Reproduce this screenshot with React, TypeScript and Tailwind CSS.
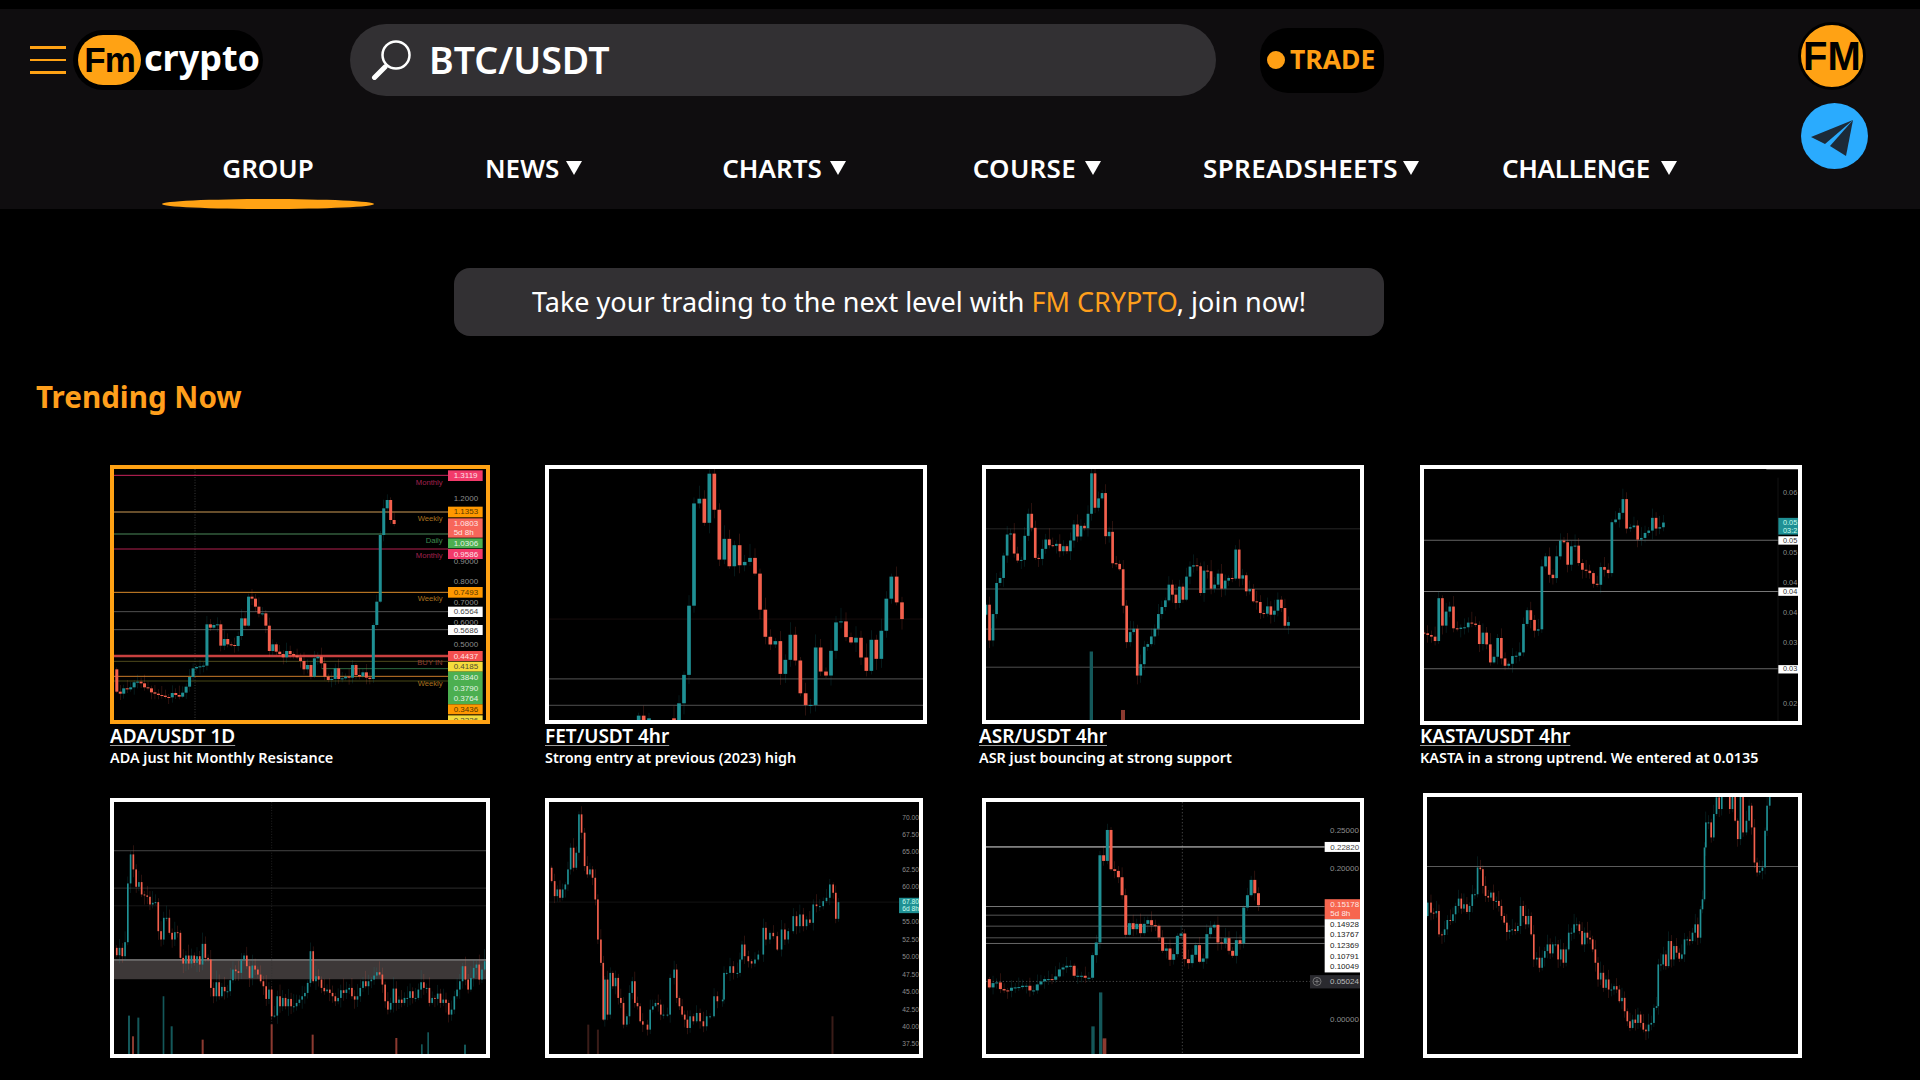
import React from 'react';

type Pt = number[];

const TEAL = '#1f9094';
const RED = '#f4604d';

const even = (x0: number, step: number, ys: number[]): Pt[] => ys.map((y, i) => [x0 + i * step, y]);

// candles run from the previous close to this one
const Candles = ({ pts, bw, wick = 1 }: { pts: Pt[]; bw: number; wick?: number }) => (
  <g>
    {pts.slice(1).map((p, i) => {
      const prev = pts[i][1];
      const top = Math.min(prev, p[1]);
      const bottom = Math.max(prev, p[1]);
      const color = p[1] > prev ? RED : TEAL;
      const up = (6 + ((i * 37) % 23)) * wick;
      const down = (4 + ((i * 53) % 19)) * wick;
      return (
        <g key={i}>
          <rect x={p[0] - 0.75} y={top - up} width={1.5} height={bottom - top + up + down} fill={color} opacity={0.35} />
          <rect x={p[0] - bw / 2} y={top} width={bw} height={Math.max(bottom - top, 3)} fill={color} />
        </g>
      );
    })}
  </g>
);

const HL = ({ y, x1 = 0, x2 = 1300, color = '#7a7a7a', w = 2 }: { y: number; x1?: number; x2?: number; color?: string; w?: number }) => (
  <line x1={x1} x2={x2} y1={y} y2={y} stroke={color} strokeWidth={w} />
);

const Tag = ({ x, w, y, h, bg, fg = '#ffffff', text }: { x: number; w: number; y: number; h: number; bg: string; fg?: string; text?: string[] }) => (
  <g>
    <rect x={x} y={y} width={w} height={h} fill={bg} />
    {(text || []).map((t, i) => (
      <text key={i} x={x + 17} y={y + 23 + i * 27} fontSize={24} fill={fg} opacity={0.85}>
        {t}
      </text>
    ))}
  </g>
);

const Axis = ({ x, size = 24, items }: { x: number; size?: number; items: [number, string][] }) => (
  <g>
    {items.map(([y, t]) => (
      <text key={y} x={x} y={y + 8} fontSize={size} fill="#8d8d8d">
        {t}
      </text>
    ))}
  </g>
);

const Note = ({ y, color, text }: { y: number; color: string; text: string }) => (
  <text x={1028} y={y + 8} fontSize={23} fill={color} textAnchor="end">
    {text}
  </text>
);

const Chart = ({ vb, children }: { vb: string; children: React.ReactNode }) => (
  <svg viewBox={vb} preserveAspectRatio="none" className="block w-full h-full bg-black font-['Liberation_Sans',sans-serif]">
    {children}
  </svg>
);

const ada = even(40, 10.4, [643, 710, 716, 700, 703, 697, 682, 680, 685, 697, 700, 712, 716, 720, 722, 726, 727, 714, 720, 725, 713, 695, 666, 640, 636, 634, 632, 508, 518, 510, 508, 572, 552, 568, 570, 573, 543, 490, 512, 425, 431, 455, 476, 475, 512, 588, 568, 590, 597, 607, 588, 597, 602, 607, 618, 643, 630, 665, 610, 605, 625, 665, 675, 672, 640, 672, 670, 665, 668, 630, 660, 664, 652, 668, 672, 510, 440, 240, 160, 135, 195, 207]);

const fet: Pt[] = [[310, 795], [325, 782], [340, 795], [356, 790], [431, 795], [446, 745], [461, 660], [476, 453], [491, 147], [507, 133], [522, 205], [537, 58], [552, 166], [567, 315], [582, 253], [597, 335], [612, 272], [628, 332], [643, 322], [659, 310], [674, 357], [689, 465], [705, 546], [720, 569], [735, 559], [750, 657], [765, 615], [780, 540], [795, 617], [810, 715], [826, 750], [841, 750], [856, 578], [871, 650], [887, 662], [902, 588], [917, 503], [932, 500], [947, 547], [962, 563], [977, 549], [992, 608], [1008, 648], [1023, 555], [1038, 612], [1053, 528], [1068, 432], [1083, 366], [1099, 443], [1115, 493]];

const asr = even(67.5, 10.55, [480, 450, 557, 478, 385, 370, 303, 240, 237, 297, 318, 316, 244, 178, 220, 310, 313, 283, 255, 272, 274, 268, 290, 275, 290, 258, 210, 246, 214, 221, 178, 57, 160, 132, 116, 245, 232, 326, 328, 344, 453, 562, 532, 522, 662, 628, 576, 568, 545, 522, 478, 457, 437, 390, 420, 445, 396, 435, 366, 336, 332, 335, 415, 348, 350, 402, 390, 357, 402, 378, 370, 372, 285, 372, 362, 410, 403, 440, 442, 475, 477, 455, 480, 468, 435, 460, 513, 502]);

const kasta = even(62, 11.05, [533, 535, 540, 545, 558, 430, 512, 470, 455, 520, 522, 518, 517, 503, 506, 510, 567, 533, 568, 622, 605, 549, 610, 632, 626, 603, 602, 592, 507, 466, 495, 527, 523, 335, 305, 360, 370, 305, 258, 263, 330, 275, 273, 325, 345, 348, 355, 387, 390, 337, 345, 355, 203, 195, 175, 134, 222, 218, 213, 255, 250, 235, 228, 190, 222, 218, 204]);

const wide = even(42, 8.3, [475, 497, 475, 500, 458, 282, 195, 240, 292, 278, 315, 318, 322, 345, 340, 338, 425, 450, 385, 385, 430, 450, 428, 430, 505, 522, 498, 522, 498, 520, 500, 525, 463, 505, 510, 595, 620, 578, 620, 592, 605, 605, 572, 540, 545, 550, 510, 498, 530, 565, 528, 540, 555, 575, 590, 628, 600, 680, 678, 620, 650, 625, 650, 628, 650, 650, 640, 630, 620, 610, 580, 485, 575, 560, 570, 595, 605, 600, 610, 620, 635, 625, 602, 610, 600, 595, 620, 630, 620, 595, 575, 590, 575, 570, 558, 548, 555, 585, 635, 660, 640, 597, 640, 630, 640, 625, 625, 605, 625, 625, 600, 578, 595, 595, 640, 625, 628, 612, 640, 630, 640, 675, 660, 620, 600, 575, 530, 570, 600, 565, 535, 525, 570, 540, 515]);

const sixth: Pt[] = [[56, 235], [64, 275], [73, 320], [81, 300], [89, 325], [97, 300], [105, 285], [113, 240], [121, 175], [130, 235], [138, 190], [146, 75], [154, 130], [163, 230], [171, 255], [179, 240], [187, 265], [195, 330], [203, 450], [212, 520], [219, 690], [224, 570], [232, 675], [240, 550], [248, 590], [256, 565], [264, 625], [272, 640], [280, 705], [290, 680], [298, 610], [306, 575], [314, 640], [322, 650], [330, 695], [338, 705], [352, 720], [360, 660], [368, 650], [376, 640], [384, 645], [392, 675], [400, 675], [412, 675], [420, 565], [432, 540], [440, 625], [448, 650], [456, 675], [464, 690], [472, 715], [480, 680], [490, 695], [500, 670], [510, 695], [520, 710], [530, 680], [540, 680], [552, 620], [562, 635], [578, 630], [582, 550], [590, 550], [600, 530], [610, 550], [622, 550], [630, 510], [636, 465], [644, 500], [655, 515], [665, 522], [675, 510], [685, 495], [700, 415], [708, 450], [720, 430], [730, 440], [742, 480], [755, 420], [765, 450], [775, 425], [790, 380], [800, 410], [810, 375], [820, 410], [830, 390], [840, 400], [850, 345], [860, 350], [870, 350], [880, 335], [890, 325], [900, 285], [910, 310], [918, 388], [926, 338]];

const seventh = even(77, 11.06, [570, 595, 582, 580, 600, 604, 605, 596, 595, 594, 590, 590, 604, 604, 586, 577, 570, 570, 572, 562, 541, 535, 530, 530, 560, 560, 560, 566, 566, 498, 460, 198, 215, 122, 240, 245, 264, 318, 437, 402, 420, 404, 432, 404, 393, 408, 410, 445, 485, 478, 512, 495, 440, 433, 510, 522, 497, 468, 518, 508, 435, 415, 407, 460, 462, 447, 485, 500, 453, 463, 355, 318, 272, 312, 348]);

const eighth: Pt[] = [[74, 380], [82, 340], [92, 370], [100, 372], [108, 365], [116, 435], [125, 437], [133, 420], [141, 392], [150, 395], [158, 375], [166, 350], [175, 328], [183, 358], [191, 345], [200, 368], [208, 350], [216, 315], [224, 315], [232, 235], [240, 240], [248, 290], [256, 320], [264, 325], [272, 310], [280, 335], [288, 335], [296, 350], [304, 380], [312, 400], [320, 428], [328, 422], [336, 420], [345, 425], [353, 410], [361, 350], [369, 380], [377, 405], [385, 380], [393, 435], [401, 510], [410, 505], [418, 535], [426, 505], [434, 485], [442, 465], [450, 492], [458, 465], [466, 465], [474, 510], [482, 480], [490, 520], [498, 480], [506, 430], [514, 430], [522, 405], [530, 405], [538, 425], [546, 465], [554, 430], [562, 445], [570, 450], [578, 480], [586, 520], [594, 570], [602, 550], [610, 595], [618, 570], [626, 600], [634, 600], [642, 590], [650, 600], [658, 635], [666, 625], [674, 665], [682, 695], [690, 715], [698, 690], [706, 700], [714, 675], [722, 700], [730, 720], [738, 725], [746, 705], [754, 700], [762, 655], [770, 650], [775, 525], [783, 525], [790, 495], [798, 530], [806, 455], [814, 510], [822, 470], [830, 490], [838, 508], [846, 495], [854, 450], [862, 450], [870, 455], [878, 430], [886, 405], [894, 445], [902, 360], [908, 330], [914, 175], [918, 100], [926, 100], [934, 145], [942, 75], [950, 25], [958, 60], [966, 24], [990, 60], [998, 24], [1006, 95], [1014, 150], [1022, 24], [1030, 130], [1040, 95], [1048, 50], [1056, 115], [1064, 220], [1072, 250], [1080, 245], [1088, 235], [1096, 125], [1102, 50], [1110, 24]];

const Caption = ({ title, text, className = '' }: { title: string; text: string; className?: string }) => (
  <div className={`text-white ${className}`}>
    <div className="text-[19px] leading-[24px] font-semibold underline decoration-[#9a9a9a] underline-offset-2">{title}</div>
    <div className="text-[14.4px] leading-[19px] font-semibold">{text}</div>
  </div>
);

const Arrow = ({ className = 'ml-[7px]' }: { className?: string }) => (
  <span className={`w-0 h-0 border-l-[8px] border-r-[8px] border-t-[14px] border-l-transparent border-r-transparent border-t-white ${className}`} />
);

const App = () => {
  return (
    <div className="h-screen w-full overflow-hidden bg-black pt-[9px] font-['Noto_Sans',sans-serif]">
      {/* Header */}
      <header className="flex h-[200px] bg-[#0f0d0f]">
        <div className="w-[1801px]">
          <div className="flex items-center h-[72px] mt-[15px]">
            <div className="ml-[30px] w-[36px] flex flex-col gap-[10px]">
              <span className="block h-[2.5px] bg-[#ffa214]" />
              <span className="block h-[2.5px] bg-[#ffa214]" />
              <span className="block h-[2.5px] bg-[#ffa214]" />
            </div>
            <div className="ml-[7px] flex items-center w-[190px] h-[60px] rounded-full bg-black pl-[5px]">
              <span className="flex items-center justify-center w-[63px] h-[50px] rounded-full bg-[#ffa214] text-black text-[35px] font-bold font-['Liberation_Sans',sans-serif] tracking-tight">Fm</span>
              <span className="ml-[3px] text-white text-[36px] leading-none font-bold mb-[4px]">crypto</span>
            </div>
            <div className="ml-[87px] flex items-center w-[866px] h-[72px] rounded-full bg-[#323033] pl-[21px]">
              <svg viewBox="0 0 41 40" className="w-[41px] h-[40px]" fill="none" stroke="#ffffff">
                <ellipse cx="25" cy="15" rx="13.5" ry="13.5" strokeWidth="2.5" />
                <path d="M14 27 L3.5 37.5" strokeWidth="5" strokeLinecap="round" />
              </svg>
              <span className="ml-[17px] text-white text-[37.5px] font-semibold">BTC/USDT</span>
            </div>
            <div className="ml-[44px] flex items-center w-[124px] h-[65px] rounded-[28px] bg-black pl-[7px]">
              <span className="w-[18px] h-[18px] rounded-full bg-[#ff9f14]" />
              <span className="ml-[5px] text-[#ff9f14] text-[26.5px] font-bold">TRADE</span>
            </div>
          </div>
          <nav className="flex items-start mt-[56px] text-white text-[26px] leading-[32px] font-semibold">
            <div className="ml-[162px] w-[212px] flex flex-col items-center">
              <span>GROUP</span>
              <span className="mt-[15px] w-[212px] h-[10px] rounded-[50%] bg-[#ffa214]" />
            </div>
            <div className="ml-[111px] flex items-center">NEWS<Arrow /></div>
            <div className="ml-[140px] flex items-center">CHARTS<Arrow className="ml-[8px]" /></div>
            <div className="ml-[127px] flex items-center tracking-[0.3px]">COURSE<Arrow className="ml-[9px]" /></div>
            <div className="ml-[102px] flex items-center tracking-[0.4px]">SPREADSHEETS<Arrow className="ml-[5px]" /></div>
            <div className="ml-[83px] flex items-center tracking-[-0.3px]">CHALLENGE<Arrow className="ml-[11px]" /></div>
          </nav>
        </div>
        <div className="pt-[13px] -ml-[3px]">
          <div className="flex items-center justify-center w-[68px] h-[68px] rounded-full bg-[#ffa214] border-[3px] border-black text-black text-[40px] font-bold font-['Liberation_Sans',sans-serif]">FM</div>
          <svg viewBox="0 0 67 66" className="mt-[13px] ml-[3px] w-[67px] h-[66px]">
            <ellipse cx="33.5" cy="33" rx="33.5" ry="33" fill="#2aabfe" />
            <path d="M52 17 L10 34 L24 41 Z" fill="#1c2a38" />
            <path d="M52 17 L29 43 L45 53 Z" fill="#1c2a38" />
          </svg>
        </div>
      </header>

      {/* Banner */}
      <div className="mt-[59px] ml-[454px] flex items-center justify-center w-[930px] h-[68px] rounded-2xl bg-[#323033] text-[27px] text-white">
        <span>Take your trading to the next level with <span className="text-[#ff9f1c]">FM CRYPTO</span>, join now!</span>
      </div>

      <h2 className="mt-[41px] ml-[36px] text-[29.6px] leading-[40px] font-bold text-[#ff9f1c]">Trending Now</h2>

      {/* Charts */}
      <div className="mt-[48px] ml-[110px]">
        <div className="flex h-[333px]">
          <div className="w-[435px]">
            <div className="w-[380px] h-[259px] border-4 border-[#ffa214]">
              <Chart vb="42 42 1116 753">
                <line x1="285" x2="285" y1="42" y2="795" stroke="#555" strokeWidth="2" strokeDasharray="3 5" />
                <HL y={61} x2={1044} color="#c9245c" w={3} />
                <HL y={171} x2={1044} color="#8a683a" w={4} />
                <HL y={237} x2={1044} color="#4d8a5a" w={3} />
                <HL y={282} x2={1044} color="#b3204e" w={3} />
                <HL y={412} x2={1044} color="#d98a2a" w={3} />
                <HL y={470} x2={1044} />
                <HL y={524} x2={1044} />
                <HL y={603} x2={1044} color="#c8403f" w={7} />
                <HL y={619} x2={1044} color="#77702a" />
                <HL y={641} x1={665} x2={1044} color="#2d6b42" w={3} />
                <HL y={664} x2={1044} color="#c87a2a" w={3} />
                <HL y={678} x2={1044} color="#6a6a20" />
                <Candles pts={ada} bw={9} wick={1} />
                <Note y={81} color="#a3224f" text="Monthly" />
                <Note y={190} color="#a8701f" text="Weekly" />
                <Note y={255} color="#3f8a50" text="Daily" />
                <Note y={301} color="#a3224f" text="Monthly" />
                <Note y={431} color="#a8701f" text="Weekly" />
                <Note y={622} color="#8a3a30" text="BUY IN" />
                <Note y={684} color="#a8701f" text="Weekly" />
                <Axis x={1061} items={[[131, '1.2000'], [318, '0.9000'], [380, '0.8000'], [443, '0.7000'], [503, '0.6000'], [567, '0.5000']]} />
                <Tag x={1044} w={104} y={46} h={32} bg="#f23a6a" text={['1.3119']} />
                <Tag x={1044} w={104} y={155} h={32} bg="#ff9800" fg="#3a2a00" text={['1.1353']} />
                <Tag x={1044} w={104} y={190} h={58} bg="#f7665a" text={['1.0803', '5d 8h']} />
                <Tag x={1044} w={104} y={250} h={30} bg="#4caf50" text={['1.0306']} />
                <Tag x={1044} w={104} y={282} h={30} bg="#f23a6a" text={['0.9586']} />
                <Tag x={1044} w={104} y={396} h={32} bg="#ff9800" fg="#3a2a00" text={['0.7493']} />
                <Tag x={1044} w={104} y={455} h={31} bg="#ffffff" fg="#222" text={['0.6564']} />
                <Tag x={1044} w={104} y={510} h={30} bg="#ffffff" fg="#222" text={['0.5686']} />
                <Tag x={1044} w={104} y={588} h={30} bg="#f44f4f" text={['0.4437']} />
                <Tag x={1044} w={104} y={620} h={30} bg="#f5dc3c" fg="#333" text={['0.4185']} />
                <Tag x={1044} w={104} y={650} h={98} bg="#4caf50" text={[]} />
                <text x={1061} y={675} fontSize={24} fill="#fff" opacity={0.85}>0.3840</text>
                <text x={1061} y={707} fontSize={24} fill="#fff" opacity={0.85}>0.3790</text>
                <text x={1061} y={739} fontSize={24} fill="#fff" opacity={0.85}>0.3764</text>
                <Tag x={1044} w={104} y={748} h={30} bg="#ff9800" fg="#3a2a00" text={['0.3436']} />
                <Tag x={1044} w={104} y={781} h={20} bg="#f5dc3c" fg="#333" text={['0.3336']} />
              </Chart>
            </div>
            <Caption title="ADA/USDT 1D" text="ADA just hit Monthly Resistance" />
          </div>
          <div className="w-[437px]">
            <div className="w-[382px] h-[259px] border-4 border-white">
              <Chart vb="56 44 1122 751">
                <HL y={493} color="#241414" />
                <HL y={672} color="#444" w={4} />
                <HL y={751} color="#777" />
                <Candles pts={fet} bw={11} wick={1.5} />
              </Chart>
            </div>
            <Caption title="FET/USDT 4hr" text="Strong entry at previous (2023) high" />
          </div>
          <div className="w-[438px]">
            <div className="w-[382px] h-[259px] border-4 border-white">
              <Chart vb="78 44 1122 751">
                <HL y={223} color="#3a3a3a" />
                <HL y={403} color="#666" />
                <HL y={523} color="#888" />
                <HL y={637} color="#777" />
                <rect x="389" y="590" width="10" height="205" fill="#14585a" />
                <rect x="483" y="765" width="12" height="30" fill="#8c3a30" />
                <Candles pts={asr} bw={8} wick={1.2} />
              </Chart>
            </div>
            <Caption className="-ml-[3px]" title="ASR/USDT 4hr" text="ASR just bouncing at strong support" />
          </div>
          <div>
            <div className="w-[382px] h-[260px] border-4 border-white">
              <Chart vb="73 44 1122 753">
                <HL y={257} color="#666" x2={1137} w={3} />
                <HL y={410} color="#777" x2={1137} w={3} />
                <HL y={641} color="#666" x2={1137} w={3} />
                <line x1="1135" x2="1135" y1="70" y2="797" stroke="#1d1d1d" strokeWidth="2" />
                <rect x="1100" y="44" width="95" height="3" fill="#444" />
                <Candles pts={kasta} bw={8} wick={1.2} />
                <Axis x={1150} size={22} items={[[115, '0.06'], [293, '0.05'], [384, '0.04'], [473, '0.04'], [563, '0.03'], [743, '0.02']]} />
                <Tag x={1136} w={60} y={190} h={50} bg="#1f9094" />
                <text x={1150} y={210} fontSize={22} fill="#cfe">0.05</text>
                <text x={1150} y={234} fontSize={22} fill="#cfe">03:2</text>
                <rect x="1136" y="245" width="60" height="25" fill="#fff" />
                <text x={1150} y={265} fontSize={22} fill="#333">0.05</text>
                <rect x="1136" y="398" width="60" height="25" fill="#fff" />
                <text x={1150} y={418} fontSize={22} fill="#333">0.04</text>
                <rect x="1136" y="630" width="60" height="25" fill="#fff" />
                <text x={1150} y={649} fontSize={22} fill="#333">0.03</text>
              </Chart>
            </div>
            <Caption className="-mt-px" title="KASTA/USDT 4hr" text="KASTA in a strong uptrend. We entered at 0.0135" />
          </div>
        </div>

        <div className="flex">
          <div className="w-[435px]">
            <div className="w-[380px] h-[260px] border-4 border-white">
              <Chart vb="42 38 1116 755">
                <rect x="42" y="511" width="1116" height="58" fill="#3d3838" />
                <HL y={511} color="#8a8a8a" w={3} />
                <HL y={184} color="#666" />
                <HL y={296} color="#444" />
                <HL y={349} color="#222" />
                <line x1="515" x2="515" y1="38" y2="793" stroke="#333" strokeWidth="2" strokeDasharray="3 5" />
                <rect x="84" y="678" width="6" height="115" fill="#14585a" />
                <rect x="112" y="684" width="6" height="109" fill="#14585a" />
                <rect x="188" y="620" width="5" height="173" fill="#14585a" />
                <rect x="212" y="710" width="6" height="83" fill="#14585a" />
                <rect x="96" y="740" width="6" height="53" fill="#8c3a30" />
                <rect x="512" y="704" width="6" height="89" fill="#8c3a30" />
                <rect x="635" y="735" width="6" height="58" fill="#8c3a30" />
                <rect x="305" y="750" width="6" height="43" fill="#8c3a30" />
                <rect x="982" y="728" width="5" height="65" fill="#14585a" />
                <rect x="963" y="764" width="5" height="29" fill="#14585a" />
                <rect x="1092" y="765" width="6" height="28" fill="#14585a" />
                <rect x="886" y="745" width="6" height="48" fill="#8c3a30" />
                <Candles pts={wide} bw={5} wick={1.3} />
              </Chart>
            </div>
          </div>
          <div className="w-[437px]">
            <div className="w-[378px] h-[260px] border-4 border-white">
              <Chart vb="56 38 1112 755">
                <HL y={338} color="#1c1c1c" />
                <rect x="171" y="705" width="6" height="88" fill="#3a1c18" />
                <rect x="200" y="720" width="6" height="73" fill="#3a1c18" />
                <rect x="905" y="680" width="6" height="113" fill="#3a1c18" />
                <Candles pts={sixth} bw={5} wick={1.1} />
                <Axis x={1118} size={20} items={[[83, '70.00'], [135, '67.50'], [187, '65.00'], [240, '62.50'], [292, '60.00'], [397, '55.00'], [449, '52.50'], [501, '50.00'], [553, '47.50'], [605, '45.00'], [658, '42.50'], [710, '40.00'], [762, '37.50']]} />
                <rect x="1108" y="325" width="60" height="46" fill="#1f9094" />
                <text x={1118} y={345} fontSize={20} fill="#cfe">67.80</text>
                <text x={1118} y={366} fontSize={20} fill="#cfe">6d 8h</text>
              </Chart>
            </div>
          </div>
          <div className="w-[441px]">
            <div className="w-[382px] h-[260px] border-4 border-white">
              <Chart vb="78 38 1122 757">
                <line x1="667" x2="667" y1="38" y2="795" stroke="#666" strokeWidth="2" strokeDasharray="4 6" />
                <line x1="78" x2="1050" y1="577" y2="577" stroke="#666" strokeWidth="2" strokeDasharray="4 6" />
                <HL y={173} x2={1094} color="#e4e4e4" w={3} />
                <HL y={352} x2={1094} color="#777" w={3} />
                <HL y={378} x2={1094} color="#555" w={3} />
                <HL y={411} x2={1094} color="#555" w={3} />
                <HL y={446} x2={1094} color="#555" w={3} />
                <HL y={463} x2={1094} color="#666" w={3} />
                <rect x="394" y="712" width="10" height="83" fill="#14585a" />
                <rect x="417" y="610" width="10" height="185" fill="#14585a" />
                <rect x="428" y="748" width="11" height="47" fill="#8c3a30" />
                <Candles pts={seventh} bw={9} wick={1.1} />
                <Axis x={1110} items={[[122, '0.25000'], [236, '0.20000'], [691, '0.00000']]} />
                <Tag x={1094} w={106} y={158} h={30} bg="#ffffff" fg="#222" text={['0.22820']} />
                <Tag x={1094} w={106} y={330} h={60} bg="#f7664f" text={['0.15178', '5d 8h']} />
                <rect x="1094" y="390" width="106" height="160" fill="#fff" />
                <text x={1110} y={413} fontSize={24} fill="#222">0.14928</text>
                <text x={1110} y={445} fontSize={24} fill="#222">0.13767</text>
                <text x={1110} y={478} fontSize={24} fill="#222">0.12369</text>
                <text x={1110} y={509} fontSize={24} fill="#222">0.10791</text>
                <text x={1110} y={541} fontSize={24} fill="#222">0.10049</text>
                <rect x="1050" y="558" width="150" height="40" fill="#2a2a2f" />
                <circle cx="1071" cy="577" r="12" fill="none" stroke="#999" strokeWidth="2" />
                <path d="M1064 577 H1078 M1071 570 V584" stroke="#999" strokeWidth="2" />
                <text x={1110} y={585} fontSize={24} fill="#bbb">0.05024</text>
              </Chart>
            </div>
          </div>
          <div className="-mt-[5px]">
            <div className="w-[379px] h-[265px] border-4 border-white">
              <Chart vb="80 24 1115 769">
                <HL y={232} color="#8a8a8a" />
                <Candles pts={eighth} bw={5} wick={1.2} />
              </Chart>
            </div>
          </div>
        </div>
      </div>
    </div>
  );
};

export default App;
